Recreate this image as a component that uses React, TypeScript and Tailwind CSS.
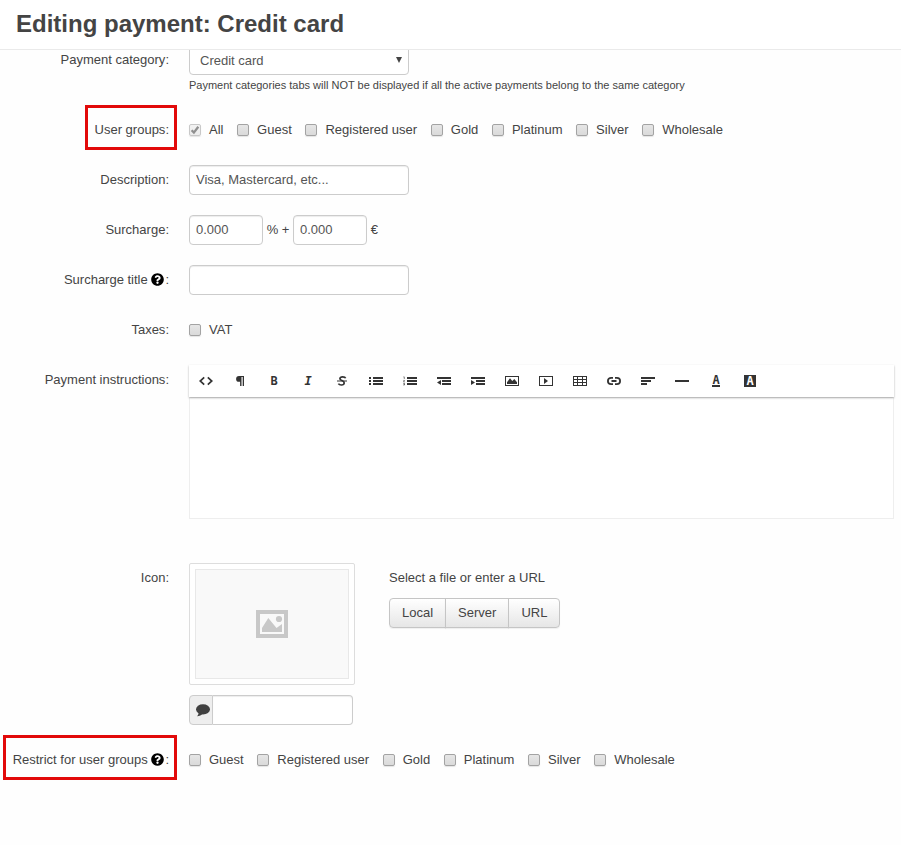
import { useState, type ReactNode } from "react";
import { FaQuestionCircle } from "react-icons/fa";

const inputClass =
  "h-[30px] rounded border border-[#ccc] bg-white px-1.5 pb-0.5 text-[13px] text-[#555] shadow-[inset_0_1px_1px_rgba(0,0,0,0.075)] outline-none focus:border-sky-400";

const uploadButtonClass =
  "h-[30px] border border-[#c5c5c5] bg-linear-to-b from-white to-[#e6e6e6] px-3 text-[13px] shadow-[0_1px_1px_rgba(0,0,0,0.06)] hover:to-[#dcdcdc]";

const userGroups = [
  "Guest",
  "Registered user",
  "Gold",
  "Platinum",
  "Silver",
  "Wholesale",
];

function Row({
  label,
  htmlFor,
  help,
  highlight,
  children,
}: {
  label: string;
  htmlFor?: string;
  help?: boolean;
  highlight?: boolean;
  children: ReactNode;
}) {
  return (
    <div className="flex gap-5">
      <div className="w-[169px] shrink-0 py-[5px] text-right">
        <label htmlFor={htmlFor} className="relative inline-block">
          {label}
          {help && (
            <>
              {" "}
              <FaQuestionCircle className="mr-px inline size-[13px] align-[-2px] text-black" />
            </>
          )}
          :
          {highlight && (
            <span className="pointer-events-none absolute -top-[15px] -right-2 -bottom-2.5 -left-2.5 border-3 border-[#e20a0a]" />
          )}
        </label>
      </div>
      <div className="min-h-[30px] min-w-0 flex-1">{children}</div>
    </div>
  );
}

function Checkbox({
  label,
  checked,
  disabled,
}: {
  label: string;
  checked?: boolean;
  disabled?: boolean;
}) {
  return (
    <label className="mr-2.5 inline-flex items-center gap-2 py-[5px]">
      <span className="relative flex">
        <input
          type="checkbox"
          defaultChecked={checked}
          disabled={disabled}
          className="peer size-3 appearance-none rounded-xs border border-[#a3a3a3] bg-linear-to-b from-[#e6e6e6] to-[#dadada] shadow-[0_1px_1px_rgba(0,0,0,0.1)] disabled:border-[#c8c8c8] disabled:from-[#f2f2f2] disabled:to-[#ececec]"
        />
        <svg
          viewBox="0 0 12 12"
          className="pointer-events-none absolute inset-0 hidden size-3 text-[#444] peer-checked:block peer-disabled:text-[#8f8f8f]"
        >
          <path
            d="M2.6 6.2 L4.9 8.6 L9.3 2.8"
            fill="none"
            stroke="currentColor"
            strokeWidth="2.3"
          />
        </svg>
      </span>
      {label}
    </label>
  );
}

function Glyph({ children }: { children: ReactNode }) {
  return (
    <svg
      viewBox="0 0 14 12"
      fill="currentColor"
      className="h-3 w-3.5"
      aria-hidden="true"
    >
      {children}
    </svg>
  );
}

const letterClass = "font-['DejaVu_Sans_Mono',monospace] text-xs font-bold";

const tools: { name: string; icon: ReactNode }[] = [
  {
    name: "HTML",
    icon: (
      <Glyph>
        <path
          d="M5.2 2.4 L1.2 6 L5.2 9.6 M8.8 2.4 L12.8 6 L8.8 9.6"
          fill="none"
          stroke="currentColor"
          strokeWidth="1.7"
        />
      </Glyph>
    ),
  },
  {
    name: "Formatting",
    icon: (
      <Glyph>
        <path d="M6 1 H11 V11 H9.7 V2.1 H8.5 V11 H7.1 V6.8 H6 A2.9 2.9 0 0 1 6 1 Z" />
      </Glyph>
    ),
  },
  {
    name: "Bold",
    icon: <span className={`${letterClass} leading-3`}>B</span>,
  },
  {
    name: "Italic",
    icon: <span className={`${letterClass} leading-3 italic`}>I</span>,
  },
  {
    name: "Deleted",
    icon: (
      <Glyph>
        <path
          d="M10.6 3.3 C10 1.5 5.2 1.1 4.9 3.6 C4.6 5.6 9.5 5.6 9.2 8 C8.9 10.7 4.4 10.4 3.4 8.6"
          fill="none"
          stroke="currentColor"
          strokeWidth="1.7"
        />
        <path d="M2 5.5h10v1H2z" />
      </Glyph>
    ),
  },
  {
    name: "Unordered list",
    icon: (
      <Glyph>
        <path d="M0 2h2v2H0z M0 5h2v2H0z M0 8h2v2H0z M4 2h10v2H4z M4 5h10v2H4z M4 8h10v2H4z" />
      </Glyph>
    ),
  },
  {
    name: "Ordered list",
    icon: (
      <Glyph>
        <path d="M4 2h10v2H4z M4 5h10v2H4z M4 8h10v2H4z" />
        <path
          d="M.4 1.9 H1.3 V4 M.3 5.4 H1.5 L.5 6.9 H1.8 M.3 8.4 H1.5 V10 H.3 M.6 9.2 H1.5"
          fill="none"
          stroke="currentColor"
          strokeWidth=".6"
        />
      </Glyph>
    ),
  },
  {
    name: "Outdent",
    icon: (
      <Glyph>
        <path d="M0 2h14v2H0z M5 5h9v2H5z M5 8h9v2H5z M4 5v5L0 7.5z" />
      </Glyph>
    ),
  },
  {
    name: "Indent",
    icon: (
      <Glyph>
        <path d="M0 2h14v2H0z M5 5h9v2H5z M5 8h9v2H5z M0 5v5l4-2.5z" />
      </Glyph>
    ),
  },
  {
    name: "Image",
    icon: (
      <Glyph>
        <path d="M0 1h14v10H0z M1 2v8h12V2z" fillRule="evenodd" />
        <path d="M2 9V7.2L5 3.2L7.3 6L9.3 4L12 7.2V9z" />
      </Glyph>
    ),
  },
  {
    name: "Video",
    icon: (
      <Glyph>
        <path d="M0 1h14v10H0z M1 2v8h12V2z" fillRule="evenodd" />
        <path d="M5 3v6l4-3z" />
      </Glyph>
    ),
  },
  {
    name: "Table",
    icon: (
      <Glyph>
        <path
          d="M0 1h14v10H0z M1 2v2h3V2z M5 2v2h4V2z M10 2v2h3V2z M1 5v2h3V5z M5 5v2h4V5z M10 5v2h3V5z M1 8v2h3V8z M5 8v2h4V8z M10 8v2h3V8z"
          fillRule="evenodd"
        />
      </Glyph>
    ),
  },
  {
    name: "Link",
    icon: (
      <Glyph>
        <path
          d="M6 2.8 H4.1 A3.2 3.2 0 0 0 4.1 9.2 H6 M8 2.8 H9.9 A3.2 3.2 0 0 1 9.9 9.2 H8 M4.5 6 H9.5"
          fill="none"
          stroke="currentColor"
          strokeWidth="1.8"
        />
      </Glyph>
    ),
  },
  {
    name: "Alignment",
    icon: (
      <Glyph>
        <path d="M0 2h14v2H0z M0 5h10v2H0z M0 8h6v2H0z" />
      </Glyph>
    ),
  },
  {
    name: "Horizontal rule",
    icon: (
      <Glyph>
        <path d="M0 5h14v2H0z" />
      </Glyph>
    ),
  },
  {
    name: "Font color",
    icon: (
      <span className={`${letterClass} h-3 border-b-2 border-current leading-[11px]`}>
        A
      </span>
    ),
  },
  {
    name: "Back color",
    icon: (
      <span
        className={`${letterClass} size-3 bg-[#333] text-center leading-3 text-white`}
      >
        A
      </span>
    ),
  },
];

function Editor() {
  const [text, setText] = useState("");

  return (
    <div className="mb-6">
      <div className="relative flex min-h-8 flex-wrap bg-white shadow-[0_1px_2px_rgba(0,0,0,0.3)]">
        {tools.map((tool) => (
          <button
            key={tool.name}
            type="button"
            aria-label={tool.name}
            className="flex h-8 w-[34px] items-center justify-center text-[#333] hover:bg-gray-100"
          >
            {tool.icon}
          </button>
        ))}
      </div>
      <textarea
        id="instructions"
        value={text}
        onChange={(e) => setText(e.target.value)}
        className="block h-[122px] w-full resize-none border border-[#eee] bg-white p-3 outline-none"
      />
    </div>
  );
}

function IconUpload() {
  return (
    <div className="flex">
      <div className="w-[200px] shrink-0">
        <div className="h-[122px] w-[166px] rounded-xs border border-[#ddd] bg-white p-[5px]">
          <div className="flex h-full items-center justify-center border border-[#e8e8e8] bg-[#f9f9f9]">
            <svg viewBox="0 0 32 28" className="h-7 w-8" fill="#c8c8c8">
              <path d="M0 0h32v28H0z M4 4v20h24V4z" fillRule="evenodd" />
              <circle cx="23" cy="9" r="3.1" />
              <path d="M6 22V18L12.3 8L20.5 18L26 14V22z" />
            </svg>
          </div>
        </div>
        <div className="mt-2.5 flex w-[164px]">
          <label
            htmlFor="icon-alt"
            aria-label="Alternative text"
            className="flex w-6 items-center justify-end rounded-l border border-[#ccc] bg-[#eee] pr-0.5"
          >
            <svg viewBox="0 0 14 13" className="h-[13px] w-3.5" fill="#404040">
              <ellipse cx="7" cy="5.3" rx="7" ry="5.1" />
              <path d="M2.6 8 C2.8 10 2 11.2 1 12.3 C3.6 12.1 5.4 11.3 6.6 9.8z" />
            </svg>
          </label>
          <input
            id="icon-alt"
            type="text"
            className={`${inputClass} min-w-0 flex-1 rounded-l-none border-l-0`}
          />
        </div>
      </div>
      <div>
        <p className="py-[5px]">Select a file or enter a URL</p>
        <div className="mt-[5px] flex">
          <button type="button" className={`${uploadButtonClass} rounded-l`}>
            Local
          </button>
          <button type="button" className={`${uploadButtonClass} -ml-px`}>
            Server
          </button>
          <button type="button" className={`${uploadButtonClass} -ml-px rounded-r`}>
            URL
          </button>
        </div>
      </div>
    </div>
  );
}

function App() {
  return (
    <div className="min-h-screen bg-[#fefefe] font-['Liberation_Sans',Arial,sans-serif] text-[13px] leading-5 text-[#444]">
      <header className="relative z-10 border-b border-[#eaeaea] bg-white px-4 pt-1 pb-[5px]">
        <h1 className="text-2xl leading-10 font-bold">
          Editing payment: Credit card
        </h1>
      </header>
      <form className="-mt-[5px] flex flex-col gap-5 pr-[7px]">
        <Row label="Payment category" htmlFor="category">
          <div className="relative w-[220px]">
            <select
              id="category"
              className="block h-[30px] w-full appearance-none rounded border border-[#ccc] bg-white px-2.5 pt-0.5 text-[13px] text-[#555] outline-none focus:border-sky-400"
            >
              <option>Credit card</option>
            </select>
            <svg
              viewBox="0 0 6 6"
              className="pointer-events-none absolute top-3 right-[7px] size-1.5"
              fill="#444"
            >
              <path d="M0 0h6L3 6z" />
            </svg>
          </div>
          <p className="text-[11px]">
            Payment categories tabs will NOT be displayed if all the active
            payments belong to the same category
          </p>
        </Row>
        <Row label="User groups" highlight>
          <Checkbox label="All" checked disabled />{" "}
          {userGroups.map((group) => (
            <span key={group}>
              <Checkbox label={group} />{" "}
            </span>
          ))}
        </Row>
        <Row label="Description" htmlFor="description">
          <input
            id="description"
            type="text"
            defaultValue="Visa, Mastercard, etc..."
            className={`${inputClass} block w-[220px]`}
          />
        </Row>
        <Row label="Surcharge" htmlFor="surcharge">
          <input
            id="surcharge"
            type="text"
            defaultValue="0.000"
            className={`${inputClass} w-[74px]`}
          />{" "}
          % +{" "}
          <input
            type="text"
            aria-label="Absolute surcharge"
            defaultValue="0.000"
            className={`${inputClass} w-[74px]`}
          />{" "}
          €
        </Row>
        <Row label="Surcharge title" htmlFor="surcharge-title" help>
          <input
            id="surcharge-title"
            type="text"
            className={`${inputClass} block w-[220px]`}
          />
        </Row>
        <Row label="Taxes">
          <Checkbox label="VAT" />
        </Row>
        <Row label="Payment instructions" htmlFor="instructions">
          <Editor />
        </Row>
        <Row label="Icon" htmlFor="icon-alt">
          <IconUpload />
        </Row>
        <Row label="Restrict for user groups" help highlight>
          {userGroups.map((group) => (
            <span key={group}>
              <Checkbox label={group} />{" "}
            </span>
          ))}
        </Row>
      </form>
    </div>
  );
}

export default App;
